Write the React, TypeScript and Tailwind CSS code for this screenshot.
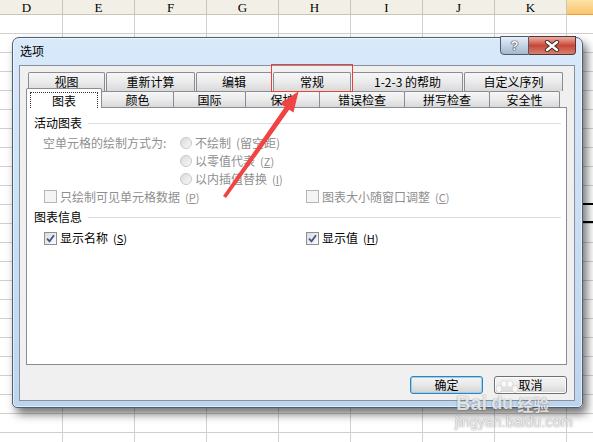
import React from 'react';

const COLS = ['D', 'E', 'F', 'G', 'H', 'I', 'J', 'K', 'L'];
const ROWS = Array.from({ length: 23 }, (_, i) => i);

function Sheet() {
  return (
    <div className="flex flex-col ml-[-9px]">
      <div className="flex h-[15px]">
        {COLS.map((c) => (
          <div
            key={c}
            className={
              c === 'L'
                ? "w-[72px] shrink-0 h-[15px] border-r border-b border-r-[#e8b060] border-b-[#f29b3a] bg-gradient-to-b from-[#fde3a7] to-[#f9c46a]"
                : "w-[72px] shrink-0 h-[15px] border-r border-b border-[#c9c6b8] bg-[#f2f0e6] flex items-center justify-center font-['Liberation_Serif',serif] text-[13px] leading-none text-black"
            }
          >
            {c === 'L' ? null : c}
          </div>
        ))}
      </div>
      {ROWS.map((r) => (
        <div key={r} className="flex h-[19px]">
          {COLS.map((c) => (
            <div key={c} className="w-[72px] shrink-0 h-[19px] border-r border-b border-[#d0d0d0]" />
          ))}
        </div>
      ))}
    </div>
  );
}

function Radio() {
  return <span className="w-[12px] h-[12px] rounded-full border border-[#c8c8c8] bg-gradient-to-br from-[#dadada] to-[#f8f8f8] shrink-0" />;
}

function Check({ checked, disabled }: { checked?: boolean; disabled?: boolean }) {
  return (
    <span
      className={
        disabled
          ? 'w-[13px] h-[13px] border border-[#b5b5b5] bg-[#f4f4f4] shrink-0 flex items-center justify-center'
          : 'w-[13px] h-[13px] border border-[#8e8f8f] bg-gradient-to-br from-[#dcdcdc] to-[#fbfbfb] shrink-0 flex items-center justify-center'
      }
    >
      {checked && (
        <svg width="9" height="9" viewBox="0 0 9 9">
          <path d="M1 4.6 L3.5 7.3 L8 1.2" stroke="#3f5590" strokeWidth="1.8" fill="none" />
        </svg>
      )}
    </span>
  );
}

function Mn({ k }: { k: string }) {
  return (
    <span className="ml-[2px] text-[11px]">
      (<span className="underline">{k}</span>)
    </span>
  );
}

const ROW1 = [
  { t: '视图', w: 'w-[77px]' },
  { t: '重新计算', w: 'w-[89px]' },
  { t: '编辑', w: 'w-[76px]' },
  { t: '常规', w: 'w-[78px]' },
  { t: '1-2-3 的帮助', w: 'w-[111px]' },
  { t: '自定义序列', w: 'w-[99px]' },
];

const ROW2 = [
  { t: '颜色', w: 'w-[73px]' },
  { t: '国际', w: 'w-[73px]' },
  { t: '保护', w: 'w-[75px]' },
  { t: '错误检查', w: 'w-[86px]' },
  { t: '拼写检查', w: 'w-[86px]' },
  { t: '安全性', w: 'w-[71px]' },
];

const tabCls =
  'shrink-0 border border-b-0 border-[#898c95] rounded-t-[2px] bg-gradient-to-b from-[#f6f6f6] via-[#ebebeb] to-[#d9d9d9] flex items-center justify-center text-[12px] leading-none text-black';

function Dialog() {
  return (
    <div className="absolute left-[12px] top-[37px] w-[571px] h-[371px] rounded-t-[7px] rounded-b-[5px] border border-[#4f5f73] bg-gradient-to-b from-[#d8e9fa] to-[#bcd5ef] shadow-[inset_0_0_0_1px_rgba(255,255,255,0.55),4px_6px_10px_rgba(0,0,0,0.55)]">
      <div className="h-[27px] flex items-start justify-between">
        <span className="ml-[7px] mt-[6px] text-[12px] leading-[14px] text-black">选项</span>
        <div className="flex mt-[-2px] mr-[6px]">
          <div className="w-[29px] h-[19px] border border-[#4c5b6d] rounded-bl-[4px] bg-gradient-to-b from-[#e6eef7] via-[#c5d4e5] to-[#a4b8cf] flex items-center justify-center text-white font-bold text-[13px] leading-none font-['Liberation_Sans',sans-serif] [text-shadow:0_0_1px_#2a3340,0_0_1px_#2a3340,0_0_1px_#2a3340]">
            ?
          </div>
          <div className="w-[47px] h-[19px] border border-l-0 border-[#5a3434] rounded-br-[4px] bg-gradient-to-b from-[#eab0a3] via-[#c74638] to-[#d6806f] flex items-center justify-center">
            <svg width="16" height="12" viewBox="0 0 16 12">
              <path d="M3 2 L13 10 M13 2 L3 10" stroke="#3a2a2a" strokeWidth="4.2" strokeLinecap="round" />
              <path d="M3 2 L13 10 M13 2 L3 10" stroke="#ffffff" strokeWidth="2.4" strokeLinecap="round" />
            </svg>
          </div>
        </div>
      </div>

      <div className="ml-[6px] w-[556px] h-[336px] border border-[#8a909a] bg-[#f0f0f0] flex flex-col">
        <div className="pt-[6px]">
          <div className="flex gap-[1px] ml-[8px] h-[19px]">
            {ROW1.map((t) => (
              <div key={t.t} className={`${tabCls} ${t.w} h-[19px] pb-[1px]`}>
                {t.t}
              </div>
            ))}
          </div>
          <div className="flex items-end ml-[6px] h-[16px]">
            <div className="relative z-10 top-[1px] w-[76px] h-[20px] shrink-0 border border-b-0 border-[#898c95] rounded-t-[2px] bg-white p-[3px] pb-0">
              <div className="w-full h-full border border-dotted border-b-0 border-[#333] flex items-center justify-center text-[12px] leading-none text-black pt-[1px]">
                图表
              </div>
            </div>
            {ROW2.map((t) => (
              <div key={t.t} className={`${tabCls} ${t.w} h-[16px] -ml-px`}>
                {t.t}
              </div>
            ))}
          </div>
        </div>

        <div className="ml-[6px] w-[541px] h-[258px] border border-[#898c95] bg-white flex flex-col text-[12px] leading-[14px]">
          <div className="mt-[8px] h-[14px] flex items-center pl-[7px] pr-[5px]">
            <span className="text-black">活动图表</span>
            <span className="flex-1 h-px bg-[#d5dfe5] ml-[6px]" />
          </div>

          <div className="mt-[4px] flex text-[#8f8f8f]">
            <div className="w-[153px] pl-[16px] h-[18px] flex items-center">空单元格的绘制方式为:</div>
            <div className="flex flex-col">
              <div className="h-[18px] flex items-center gap-[3px]">
                <Radio />
                <span>不绘制</span>
                <span className="ml-[2px]">(留空距)</span>
              </div>
              <div className="h-[18px] flex items-center gap-[3px]">
                <Radio />
                <span>以零值代表</span>
                <Mn k="Z" />
              </div>
              <div className="h-[18px] flex items-center gap-[3px]">
                <Radio />
                <span>以内插值替换</span>
                <Mn k="I" />
              </div>
            </div>
          </div>

          <div className="h-[17px] flex items-center text-[#8f8f8f]">
            <div className="w-[279px] pl-[17px] flex items-center gap-[3px]">
              <Check disabled />
              <span>只绘制可见单元格数据</span>
              <Mn k="P" />
            </div>
            <div className="flex items-center gap-[3px]">
              <Check disabled />
              <span>图表大小随窗口调整</span>
              <Mn k="C" />
            </div>
          </div>

          <div className="mt-[5px] h-[14px] flex items-center pl-[7px] pr-[5px]">
            <span className="text-black">图表信息</span>
            <span className="flex-1 h-px bg-[#d5dfe5] ml-[6px]" />
          </div>

          <div className="mt-[7px] h-[14px] flex items-center text-black">
            <div className="w-[279px] pl-[17px] flex items-center gap-[3px]">
              <Check checked />
              <span>显示名称</span>
              <Mn k="S" />
            </div>
            <div className="flex items-center gap-[3px]">
              <Check checked />
              <span>显示值</span>
              <Mn k="H" />
            </div>
          </div>
        </div>

        <div className="mt-[11px] flex justify-end gap-[11px] pr-[7px]">
          <div className="w-[73px] h-[18px] rounded-[3px] border border-[#3c7fb1] bg-gradient-to-b from-[#f3f3f3] via-[#e8e8e8] to-[#d2d2d2] shadow-[inset_0_0_0_1px_#8fd4f5] flex items-center justify-center text-[12px] leading-none text-black">
            确定
          </div>
          <div className="w-[73px] h-[18px] rounded-[3px] border border-[#707070] bg-gradient-to-b from-[#f4f4f4] via-[#ebebeb] to-[#d6d6d6] shadow-[inset_0_0_0_1px_#fcfcfc] flex items-center justify-center text-[12px] leading-none text-black">
            取消
          </div>
        </div>
      </div>
    </div>
  );
}

export default function App() {
  return (
    <div className="relative w-[593px] h-[442px] overflow-hidden bg-white font-['Noto_Sans_CJK_SC','Noto_Sans',sans-serif]">
      <Sheet />
      <div className="absolute left-[578px] top-[203px] w-[15px] h-[2px] bg-black" />
      <div className="absolute left-[578px] top-[221px] w-[15px] h-[2px] bg-black" />
      <Dialog />

      <svg className="absolute left-0 top-0 pointer-events-none" width="593" height="442" viewBox="0 0 593 442">
        <rect x="271.5" y="64.5" width="81" height="27" fill="none" stroke="#e8403f" strokeWidth="1" />
        <polygon
          points="223,196 285,106.8 280.5,103.4 298.6,91.2 293.5,112.6 289.2,109.7 226,198"
          fill="#f04343"
        />
      </svg>

      <div className="absolute left-[494px] top-[380px] pointer-events-none">
        <svg width="26" height="16" viewBox="0 0 26 16">
          <g fill="#ffffff" stroke="#cfcfcf" strokeWidth="0.8" opacity="0.75">
            <ellipse cx="5" cy="9" rx="3" ry="3.5" />
            <ellipse cx="10" cy="4" rx="3" ry="3.5" />
            <ellipse cx="16" cy="4" rx="3" ry="3.5" />
            <ellipse cx="21" cy="9" rx="3" ry="3.5" />
          </g>
        </svg>
      </div>
      <div className="absolute left-[456px] top-[394px] h-[18px] flex items-end pointer-events-none text-white/80 font-bold leading-none font-['Liberation_Sans',sans-serif] [text-shadow:0_0_1px_rgba(0,0,0,0.35),0_0_2px_rgba(0,0,0,0.2)]">
        <span className="text-[20px] leading-[18px]">Bai</span>
        <span className="text-[18px] leading-[18px] ml-[4px]">du</span>
        <span className="text-[16px] leading-[16px] ml-[4px] font-['Noto_Sans_CJK_SC',sans-serif]">经验</span>
      </div>
      <div className="absolute left-[455px] top-[415px] pointer-events-none text-white/85 text-[14px] leading-[14px] tracking-[0.3px] font-['Liberation_Sans',sans-serif] [text-shadow:0_0_1px_rgba(0,0,0,0.4),0_0_2px_rgba(0,0,0,0.25)]">
        jingyan.baidu.com
      </div>
    </div>
  );
}
